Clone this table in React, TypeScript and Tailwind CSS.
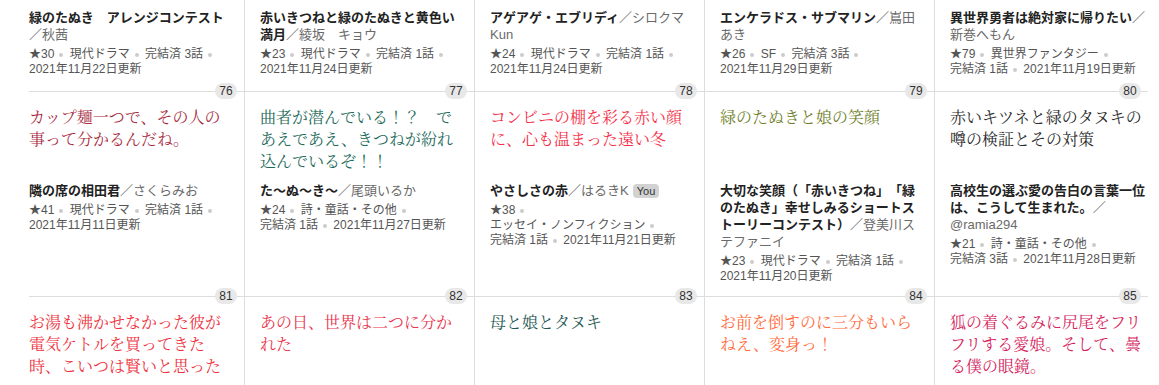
type Work = {
  title: string
  author: string
  you?: boolean
  stars: number
  genre: string
  status: string
  date: string
}

type Entry = Work & { no: number; catch: string; color: string }

const topRow: Work[] = [
  { title: '緑のたぬき　アレンジコンテスト', author: '秋茜', stars: 30, genre: '現代ドラマ', status: '完結済 3話', date: '2021年11月22日更新' },
  { title: '赤いきつねと緑のたぬきと黄色い満月', author: '綾坂　キョウ', stars: 23, genre: '現代ドラマ', status: '完結済 1話', date: '2021年11月24日更新' },
  { title: 'アゲアゲ・エブリディ', author: 'シロクマKun', stars: 24, genre: '現代ドラマ', status: '完結済 1話', date: '2021年11月24日更新' },
  { title: 'エンケラドス・サブマリン', author: '嶌田あき', stars: 26, genre: 'SF', status: '完結済 3話', date: '2021年11月29日更新' },
  { title: '異世界勇者は絶対家に帰りたい', author: '新巻へもん', stars: 79, genre: '異世界ファンタジー', status: '完結済 1話', date: '2021年11月19日更新' },
]

const middleRow: Entry[] = [
  { no: 76, catch: 'カップ麺一つで、その人の事って分かるんだね。', color: 'text-[#a82c42]', title: '隣の席の相田君', author: 'さくらみお', stars: 41, genre: '現代ドラマ', status: '完結済 1話', date: '2021年11月11日更新' },
  { no: 77, catch: '曲者が潜んでいる！？　であえであえ、きつねが紛れ込んでいるぞ！！', color: 'text-[#1c6a5a]', title: 'た〜ぬ〜き〜', author: '尾頭いるか', stars: 24, genre: '詩・童話・その他', status: '完結済 1話', date: '2021年11月27日更新' },
  { no: 78, catch: 'コンビニの棚を彩る赤い顔に、心も温まった遠い冬', color: 'text-[#f53048]', title: 'やさしさの赤', author: 'はるきK', you: true, stars: 38, genre: 'エッセイ・ノンフィクション', status: '完結済 1話', date: '2021年11月21日更新' },
  { no: 79, catch: '緑のたぬきと娘の笑顔', color: 'text-[#6f7f2c]', title: '大切な笑顔（「赤いきつね」「緑のたぬき」幸せしみるショートストーリーコンテスト）', author: '登美川ステファニイ', stars: 23, genre: '現代ドラマ', status: '完結済 1話', date: '2021年11月20日更新' },
  { no: 80, catch: '赤いキツネと緑のタヌキの噂の検証とその対策', color: 'text-[#2a2a2a]', title: '高校生の選ぶ愛の告白の言葉一位は、こうして生まれた。', author: '@ramia294', stars: 21, genre: '詩・童話・その他', status: '完結済 3話', date: '2021年11月28日更新' },
]

const bottomRow = [
  { no: 81, catch: 'お湯も沸かせなかった彼が電気ケトルを買ってきた時、こいつは賢いと思った', color: 'text-[#ee3340]' },
  { no: 82, catch: 'あの日、世界は二つに分かれた', color: 'text-[#e8364e]' },
  { no: 83, catch: '母と娘とタヌキ', color: 'text-[#1e5852]' },
  { no: 84, catch: 'お前を倒すのに三分もいらねえ、変身っ！', color: 'text-[#ff6b3d]' },
  { no: 85, catch: '狐の着ぐるみに尻尾をフリフリする愛娘。そして、曇る僕の眼鏡。', color: 'text-[#d42560]' },
]

// column boxes: first and last are narrower, borders sit between them
const cellClass = [
  'pr-4 border-r border-[#dddddd]',
  'pl-[15px] pr-4 border-r border-[#dddddd]',
  'pl-[15px] pr-4 border-r border-[#dddddd]',
  'pl-[15px] pr-4 border-r border-[#dddddd]',
  'pl-[15px]',
]

const rowGrid = 'grid grid-cols-[216px_230px_230px_230px_213px]'

function Dot() {
  return <span className="inline-block w-1 h-1 rounded-full bg-[#cccccc] ml-[5px] mr-[3px] align-middle" />
}

function Info({ w }: { w: Work }) {
  return (
    <div>
      <div className="text-[13px] leading-[17px]">
        <span className="font-bold text-[#222222]">{w.title}</span>
        <span className="text-[#6a6a6a]">／{w.author}</span>
        {w.you && (
          <span className="ml-1 inline-block rounded-sm bg-[#d2d2d2] px-1 text-[11px] leading-[14px] text-[#333333]">You</span>
        )}
      </div>
      <div className="mt-[4px] text-[12px] leading-[15px] text-[#555555]">
        <span className="whitespace-nowrap">★{w.stars}<Dot /></span>{' '}
        <span className="whitespace-nowrap">{w.genre}<Dot /></span>{' '}
        <span className="whitespace-nowrap">{w.status}<Dot /></span>{' '}
        <span className="whitespace-nowrap">{w.date}</span>
      </div>
    </div>
  )
}

function Badge({ no }: { no: number }) {
  return (
    <span className="absolute top-[-9px] right-[7px] flex h-4 w-[22px] items-center justify-center rounded-full bg-[#e8e8e8] text-[12px] text-[#333333]">
      {no}
    </span>
  )
}

function Catch({ text, color }: { text: string; color: string }) {
  return (
    <p className={`h-[66px] overflow-hidden font-['Noto_Serif_CJK_JP','Noto_Sans_CJK_JP',serif] text-[16px] leading-[22px] ${color}`}>
      {text}
    </p>
  )
}

export default function App() {
  return (
    <div className="h-[385px] w-[1159px] overflow-hidden bg-white font-['Liberation_Sans','Noto_Sans_CJK_JP',sans-serif] [text-spacing-trim:space-all]">
      <div className="ml-[29px] w-[1119px]">
        {/* partial row cut off at the top */}
        <div className={`${rowGrid} h-[91px]`}>
          {topRow.map((w, i) => (
            <div key={i} className={`pt-[9px] ${cellClass[i]}`}>
              <Info w={w} />
            </div>
          ))}
        </div>

        <div className={`${rowGrid} h-[205px] border-t border-[#dddddd]`}>
          {middleRow.map((e, i) => (
            <div key={e.no} className={`relative pt-[14px] ${cellClass[i]}`}>
              <Badge no={e.no} />
              <Catch text={e.catch} color={e.color} />
              <div className="mt-[10px]">
                <Info w={e} />
              </div>
            </div>
          ))}
        </div>

        <div className={`${rowGrid} h-[205px] border-t border-[#dddddd]`}>
          {bottomRow.map((e, i) => (
            <div key={e.no} className={`relative pt-[14px] ${cellClass[i]}`}>
              <Badge no={e.no} />
              <Catch text={e.catch} color={e.color} />
            </div>
          ))}
        </div>
      </div>
    </div>
  )
}
